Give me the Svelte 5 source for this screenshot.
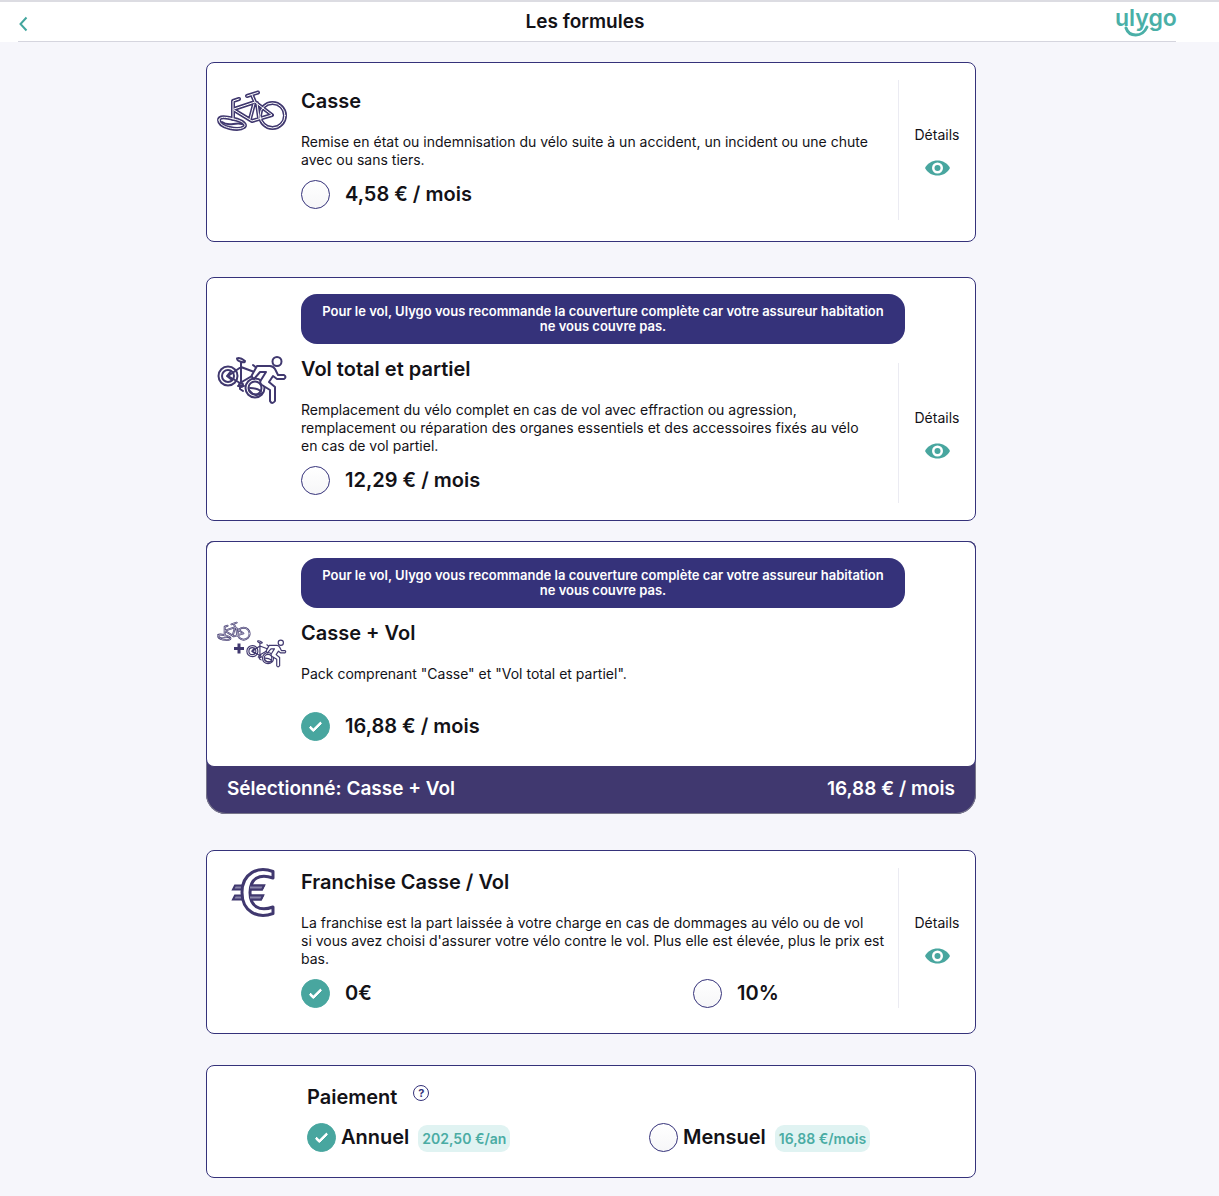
<script>
  const advice =
    'Pour le vol, Ulygo vous recommande la couverture complète car votre assureur habitation ne vous couvre pas.';

  const plans = [
    {
      id: 'casse',
      icon: 'crash',
      title: 'Casse',
      text: 'Remise en état ou indemnisation du vélo suite à un accident, un incident ou une chute\navec ou sans tiers.',
      price: '4,58 € / mois',
      details: true
    },
    {
      id: 'vol',
      icon: 'theft',
      title: 'Vol total et partiel',
      text: 'Remplacement du vélo complet en cas de vol avec effraction ou agression,\nremplacement ou réparation des organes essentiels et des accessoires fixés au vélo\nen cas de vol partiel.',
      price: '12,29 € / mois',
      advice: true,
      details: true
    },
    {
      id: 'pack',
      icon: 'both',
      title: 'Casse + Vol',
      text: 'Pack comprenant "Casse" et "Vol total et partiel".',
      price: '16,88 € / mois',
      advice: true
    }
  ];

  const excessText =
    "La franchise est la part laissée à votre charge en cas de dommages au vélo ou de vol\nsi vous avez choisi d'assurer votre vélo contre le vol. Plus elle est élevée, plus le prix est\nbas.";

  let selected = $state('pack');
  let excess = $state('0');
  let payment = $state('annual');
</script>

{#snippet crashShapes()}
  <circle cx="55.500" cy="28.500" r="12.500" />
  <path d="M16 32V14L22 12M17 22L38 15L55 28L35 34L17 23M38 15L35 8M30 9L41 5.500M40 16L42 31M37 17L33 32" />
  <path d="M2 33C2 29 9 30 17 32C26 34 30 38 27 40C22 44 2 41 2 33Z" />
{/snippet}

{#snippet crashArt()}
  <g class="wide">{@render crashShapes()}</g>
  <g class="core">{@render crashShapes()}</g>
  <path class="thin" d="M5 35C11 40 18 35 25 37" />
{/snippet}

{#snippet theftArt()}
  <g class="thin">
    <circle cx="11" cy="21" r="9.500" />
    <circle cx="11" cy="21" r="6" />
    <circle cx="38" cy="33" r="9.500" />
    <circle cx="38" cy="33" r="6.500" />
    <path d="M20 3.500Q23 2 28 6Q28 8 25 7Q20 6 20 3.500ZM24 7V29M11 21L24 12L40 18M11 21L23 28L40 18M14 16L10 21L15 25M21 31H27M23 31V34L26 36M36 10L41 14" />
    <circle cx="24" cy="30" r="2" />
    <path class="figure" d="M40 11H53Q56 11 58 14L61 20H67Q70 22 67 24H60L56 21L52 27L58 32V46Q55 50 53 46V35L45 30Q42 28 44 25L49 17H43L37 24Q34 22 35 20Z" />
    <path d="M32 35Q38 43 45 38M33 33Q39 33 44 36" />
    <circle cx="60" cy="6.500" r="4.500" />
  </g>
{/snippet}

{#snippet planIcon(kind)}
  <svg class="art" viewBox="0 0 72 50" aria-hidden="true">
    {#if kind === 'crash'}
      {@render crashArt()}
    {:else if kind === 'theft'}
      {@render theftArt()}
    {:else if kind === 'both'}
      <g transform="translate(0 1) scale(.48)">{@render crashArt()}</g>
      <g transform="translate(29 20) scale(.58)">{@render theftArt()}</g>
      <path class="plus" d="M22 24.500V34.500M17 29.500H27" />
    {:else}
      <path class="strips" d="M18 17.500H47L45 21.500H16ZM18 27.500H46L44 31.500H16Z" />
      <path class="euro" d="M56 3.500C41 -2 25 5 25 24.500S41 51 56 45.500V39C42 44 33 38 33 24.500S42 5 56 10Z" />
      <path class="strips" d="M33 17.500H47L45 21.500H33M33 27.500H46L44 31.500H33" />
    {/if}
  </svg>
{/snippet}

{#snippet details(label)}
  <aside>
    <button type="button" class="details" aria-label={`Détails ${label}`}>
      <span>Détails</span>
      <svg class="eye" viewBox="0 0 25 16" aria-hidden="true">
        <path d="M0 8C5 -2 20 -2 25 8C20 18 5 18 0 8Z" />
        <circle class="white" cx="12.500" cy="8" r="5.500" />
        <circle cx="12.500" cy="8" r="3" />
      </svg>
    </button>
  </aside>
{/snippet}

<header>
  <div class="bar">
    <button type="button" class="back" aria-label="Retour">
      <svg viewBox="0 0 10 16" aria-hidden="true"><path d="M8.500 1.500L2.500 8L8.500 14.500" /></svg>
    </button>
    <h1>Les formules</h1>
    <svg class="logo" viewBox="0 0 62 32" role="img" aria-label="ulygo">
      <text x="1" y="20">ulygo</text>
      <path d="M12 22C15 31 28 32 33 21" />
    </svg>
  </div>
</header>

<main>
  <div class="column">
    {#each plans as plan (plan.id)}
      <div class="shell {plan.id}" class:selected={selected === plan.id}>
        <section class="card">
          {#if plan.advice}
            <p class="advice">{advice}</p>
          {/if}
          <div class="row">
            <div class="content">
              {@render planIcon(plan.icon)}
              <div class="body">
                <h2>{plan.title}</h2>
                <p class="text">{plan.text}</p>
                <label class="option">
                  <input type="radio" name="plan" value={plan.id} bind:group={selected} />
                  {plan.price}
                </label>
              </div>
            </div>
            {#if plan.details}
              {@render details(plan.title)}
            {/if}
          </div>
        </section>
        {#if selected === plan.id}
          <div class="summary">
            <span>Sélectionné: {plan.title}</span>
            <span>{plan.price}</span>
          </div>
        {/if}
      </div>
    {/each}

    <section class="card excess">
      <div class="row">
        <div class="content">
          {@render planIcon('euro')}
          <div class="body">
            <h2>Franchise Casse / Vol</h2>
            <p class="text">{excessText}</p>
            <div class="choices">
              <label class="option"><input type="radio" name="excess" value="0" bind:group={excess} />0€</label>
              <label class="option"><input type="radio" name="excess" value="10" bind:group={excess} />10%</label>
            </div>
          </div>
        </div>
        {@render details('Franchise')}
      </div>
    </section>

    <section class="card payment">
      <div class="heading">
        <h2>Paiement</h2>
        <button type="button" class="help" aria-label="Aide sur le paiement">?</button>
      </div>
      <div class="methods">
        <label class="option">
          <input type="radio" name="payment" value="annual" bind:group={payment} />
          Annuel <span class="pill">202,50 €/an</span>
        </label>
        <label class="option">
          <input type="radio" name="payment" value="monthly" bind:group={payment} />
          Mensuel <span class="pill">16,88 €/mois</span>
        </label>
      </div>
    </section>
  </div>
</main>

<style>
  :global(body) {
    background: #f6f6fb;
    color: #131217;
    font-family: Inter, 'Liberation Sans', sans-serif;
  }
  * { box-sizing: border-box; }
  h1, h2, p { margin: 0; }
  h1, h2, .option { font-size: 20px; font-weight: 600; line-height: 24px; }
  h1 { margin-right: 24px; font-size: 19px; }
  button { border: 0; padding: 0; background: none; color: inherit; font: inherit; cursor: pointer; }
  svg { display: block; }

  header { background: #fff; border-top: 2px solid #dcdce2; }
  .bar {
    display: grid;
    grid-template-columns: 1fr auto 1fr;
    align-items: center;
    height: 40px;
    margin: 0 43px 0 18px;
    border-bottom: 1px solid #d5d5de;
  }
  .back { width: 10px; height: 16px; margin-top: 4px; }
  .back svg { width: 10px; height: 16px; fill: none; stroke: #43a69e; stroke-width: 2; }
  .logo { justify-self: end; width: 62px; height: 32px; overflow: visible; }
  .logo text { fill: #4aafa7; font: 600 23px Inter, sans-serif; }
  .logo path { fill: none; stroke: #4aafa7; stroke-width: 3; stroke-linecap: round; }

  main { padding: 20px 37px 18px 0; }
  .column { max-width: 770px; margin: 0 auto; }
  .shell { margin-bottom: 36px; border-radius: 8px 8px 20px 20px; }
  .shell.casse { margin-bottom: 35px; }
  .shell.vol { margin-bottom: 20px; }
  .selected { background: #40386f; box-shadow: inset 0 0 0 1px #77758a; }
  .card { background: #fff; border: 1px solid #35327a; border-radius: 8px; }
  .selected .card { border-bottom-color: #40386f; }
  .advice {
    max-width: 604px;
    margin: 16px 0 -6px 94px;
    padding: 10px 14px;
    border-radius: 16px;
    background: #35327a;
    color: #fff;
    font-size: 13px;
    font-weight: 600;
    line-height: 15px;
    text-align: center;
  }
  .row { display: flex; align-items: center; }
  .content { display: flex; flex: 1; padding: 17px 9px 25px 10px; }
  .art { flex: none; width: 72px; height: 50px; margin-right: 12px; overflow: visible; }
  .body { flex: 1; padding-top: 2px; }
  .text { min-height: 36px; margin: 20px 0 11px; font-size: 14px; line-height: 18px; white-space: pre-line; }
  .option { display: flex; align-items: flex-start; gap: 15px; line-height: 28px; }
  .choices { display: grid; grid-template-columns: 2fr 1fr; }

  input {
    display: grid;
    place-content: center;
    flex: none;
    width: 29px;
    height: 29px;
    margin: 0;
    border: 1px solid #35327a;
    border-radius: 50%;
    background: linear-gradient(#fff, #f6f6f8);
    appearance: none;
  }
  input:checked { border-color: #48a69f; background: #48a69f; }
  input:checked::after {
    content: '';
    width: 10px;
    height: 4px;
    margin-bottom: 3px;
    border: solid #fff;
    border-width: 0 0 3px 3px;
    border-radius: 2px;
    transform: rotate(-45deg);
  }

  aside { align-self: flex-start; width: 77px; height: 140px; margin: 17px 0 21px; border-left: 1px solid #ebebf2; }
  .vol aside { margin: 25px 0 17px; }
  .details { display: flex; flex-direction: column; align-items: center; gap: 16px; width: 100%; padding-top: 46px; font-size: 14px; line-height: 18px; }
  .eye { width: 25px; height: 16px; fill: #48a69f; }
  .eye .white { fill: #fff; }
  .summary { display: flex; justify-content: space-between; padding: 10px 21px 13px; color: #fff; font-size: 19px; font-weight: 600; line-height: 24px; }

  .payment { margin-top: 31px; padding: 19px 9px 25px 100px; }
  .heading { display: flex; gap: 16px; }
  .help { width: 16px; height: 16px; border: 1px solid #35327a; border-radius: 50%; color: #35327a; font-size: 11px; font-weight: 700; line-height: 14px; }
  .methods { display: flex; margin-top: 14px; }
  .methods .option { flex: 0 0 342px; gap: 5px; }
  .pill { margin: 2px 0 0 4px; padding: 4px; border-radius: 9px; background: #e0f3f2; color: #4aaca4; font-size: 14px; line-height: 19px; }

  .wide { fill: none; stroke: #40386f; stroke-width: 4; stroke-linejoin: round; stroke-linecap: round; }
  .core { fill: none; stroke: #fff; stroke-width: 1; stroke-linejoin: round; stroke-linecap: round; }
  .thin { fill: none; stroke: #40386f; stroke-width: 2; stroke-linejoin: round; stroke-linecap: round; }
  .figure { fill: #fff; }
  .euro { fill: #fff; stroke: #40386f; stroke-width: 3; stroke-linejoin: round; }
  .strips { fill: #8985aa; stroke: #40386f; stroke-width: 2; }
  .plus { stroke: #40386f; stroke-width: 3; }
</style>
